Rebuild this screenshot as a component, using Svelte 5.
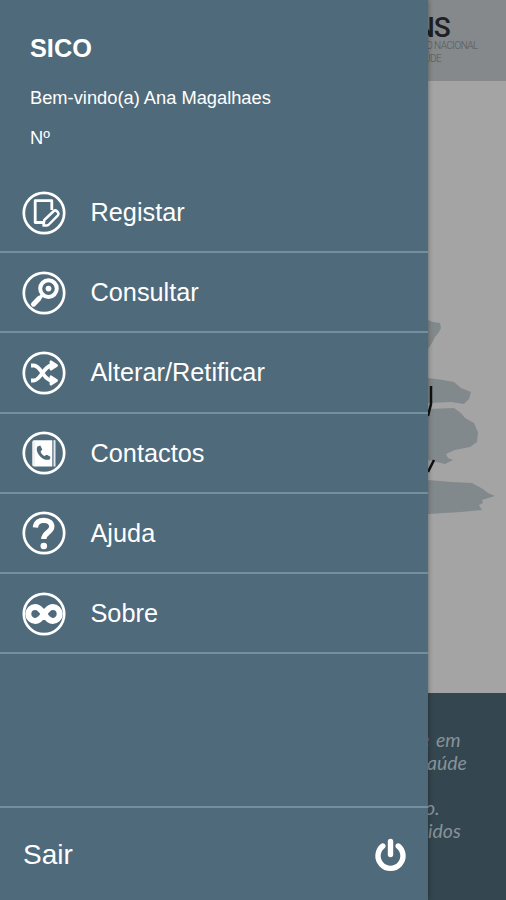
<script>
  let ativo = $state(null);

  const itens = [
    { id: 'registar', nome: 'Registar' },
    { id: 'consultar', nome: 'Consultar' },
    { id: 'alterar', nome: 'Alterar/Retificar' },
    { id: 'contactos', nome: 'Contactos' },
    { id: 'ajuda', nome: 'Ajuda' },
    { id: 'sobre', nome: 'Sobre' }
  ];
</script>

<div class="app">
  <aside class="menu">
    <div class="perfil">
      <h1>SICO</h1>
      <p>Bem-vindo(a) Ana Magalhaes</p>
      <p>Nº</p>
    </div>

    <nav>
      {#each itens as item}
        <button class="item" onclick={() => ativo = item.id}>
          <svg class="icone" viewBox="0 0 44 44" fill="none" stroke="#fff">
            <circle cx="22" cy="22" r="20.2" stroke-width="2.7" />
            {#if item.id === 'registar'}
              <path d="M29.8 19V9.7H13.2V31.5H21" stroke-width="2.8" stroke-linejoin="round" />
              <path d="M21.500 34.500l.8-5.500 9.500-9q1.500-1.200 2.800 0l1.500 1.500q1 1.400-.2 2.800l-9 9.200q-.8.8-2 .9z" stroke-width="2.500" stroke-linejoin="round" />
            {:else if item.id === 'consultar'}
              <circle cx="26.5" cy="17.6" r="8.3" stroke-width="4" />
              <circle cx="26.5" cy="17.6" r="2.9" fill="#fff" stroke="none" />
              <path d="M21 23.5l-5 5" stroke-width="3.4" />
              <path d="M17 27.5l-5.500 5.700" stroke-width="5" stroke-linecap="round" />
            {:else if item.id === 'alterar'}
              <path d="M9 14.500h3c7 0 9.500 15 18 15h2M9 29.500h3c7 0 9.500-15 18-15h2" stroke-width="3.800" />
              <path d="M29 10.800v7.400l5.500-3.700zM29 25.800v7.400l5.500-3.700z" fill="#fff" stroke-width="2.800" stroke-linejoin="round" />
            {:else if item.id === 'contactos'}
              <path d="M12 9.200h18.300v26.300h-18.300q-1.700 0-1.700-1.700v-22.900q0-1.700 1.700-1.700z" fill="#fff" stroke="none" />
              <path d="M32.500 9.200v26.300" stroke="#e3e9ec" stroke-width="2" />
              <path d="M12 10v25" stroke="#d3dbe0" stroke-width="0.800" />
              <path d="M15.500 15.500c-2 3 .3 7.700 3.200 10.500 3 2.800 6.800 3.600 9.300 2.200l.4-2.400-3.600-2.100-2.400 1.400c-1.800-.7-3.300-2.500-3.800-4.500l1.700-2.200-2-3.900z" fill="#4f6a7a" stroke="none" />
            {:else if item.id === 'ajuda'}
              <path d="M13.400 16.500c.4-5 4-7.400 8.700-7.200 4.500.2 7.700 2.500 7.700 6.300 0 5.700-8 5.900-8 12.300" stroke-width="5.300" />
              <circle cx="21.800" cy="35" r="3.300" fill="#fff" stroke="none" />
            {:else}
              <path d="M22 22c-2.800-4.200-5.300-7-8.700-7a7 7 0 0 0 0 14c3.400 0 5.900-2.800 8.700-7s5.300-7 8.700-7a7 7 0 0 1 0 14c-3.400 0-5.900-2.800-8.700-7z" stroke-width="6" />
            {/if}
          </svg>
          <span>{item.nome}</span>
        </button>
      {/each}
    </nav>

    <button class="sair">
      <span>Sair</span>
      <svg viewBox="0 0 34 34" fill="none" stroke="#fff" stroke-linecap="round">
        <path d="M9.800 8a12.500 12.500 0 1 0 15.400 0" stroke-width="5.400" />
        <path d="M17.500 3.500v13" stroke-width="5.400" />
      </svg>
    </button>
  </aside>

  <div class="pagina">
    <header>
      <div class="sns">NS</div>
      <div class="legenda">O NACIONAL</div>
      <div class="legenda saude">ÚDE</div>
    </header>
    <main>
      <svg class="mapa" viewBox="0 0 78 612">
        <path d="M0 239l5 2 7 1 1 5-2 4-4 5-3 6-4 6z" />
        <path d="M0 297l15 2 11 2 7 6 10 4-2 7-5 5-13-2-23 1z" />
        <path d="M0 328l26-1 7 5 4 5 9 5 2 5 2 4-1 10-7 5-15 3-9 4 2 4 5 2-8 4-17-4z" />
        <path d="M0 399l24 2 20 1 11 6 5 4 7 3-13 4 1 3-4 2 3 5-21 2-33 2z" />
        <path class="risco" d="M3 305v18l-3 12M6 379l-6 12" />
      </svg>
    </main>
    <footer>
      <p><span class="corte">e</span> em</p>
      <p class="recuo">aúde</p>
      <p>&nbsp;</p>
      <p class="ponto">o.</p>
      <p>idos</p>
    </footer>
  </div>
</div>

<style>
  :global(body) {
    margin: 0;
    font-family: "Liberation Sans", Arial, sans-serif;
    background: #a4a4a4;
  }

  .app {
    display: flex;
    width: 506px;
    height: 900px;
    overflow: hidden;
  }

  .menu {
    display: flex;
    flex-direction: column;
    width: 428px;
    flex-shrink: 0;
    z-index: 1;
    color: #fff;
    background: #4f6a7a;
    box-shadow: 0 0 5px rgba(0, 0, 0, 0.4);
  }

  .perfil {
    box-sizing: border-box;
    height: 173px;
    padding: 33px 30px 0;
  }

  h1 {
    margin: 0 0 22px;
    font-size: 25.3px;
    line-height: 30px;
  }

  .perfil p {
    margin: 0 0 15px;
    font-size: 18.3px;
    line-height: 25px;
    white-space: nowrap;
  }

  button {
    border: none;
    background: none;
    color: #fff;
    font-family: inherit;
    text-align: left;
    cursor: pointer;
  }

  .item {
    display: flex;
    align-items: center;
    box-sizing: border-box;
    width: 100%;
    height: 80.2px;
    padding: 1px 22px 0;
    gap: 24.5px;
    border-bottom: 2px solid #728f9e;
    font-size: 25.3px;
  }

  .icone {
    width: 44px;
    height: 44px;
    flex-shrink: 0;
  }

  .sair {
    display: flex;
    align-items: center;
    justify-content: space-between;
    box-sizing: border-box;
    height: 94px;
    margin-top: auto;
    padding: 2px 21px 0 23px;
    border-top: 2px solid #728f9e;
    font-size: 28px;
  }

  .sair svg {
    width: 34px;
    height: 34px;
  }

  .pagina {
    display: flex;
    flex-direction: column;
    width: 78px;
    overflow: hidden;
    white-space: nowrap;
  }

  header {
    box-sizing: border-box;
    height: 81px;
    padding-top: 14px;
    background: #85898b;
    color: #1c2022;
  }

  .sns {
    margin-left: -13px;
    font: 500 28px/28px Roboto, sans-serif;
    letter-spacing: -1px;
  }

  .legenda {
    margin-left: -2px;
    color: #54595c;
    font: 300 10px/12.5px Roboto, sans-serif;
    letter-spacing: -0.55px;
  }

  .sns + .legenda {
    margin-top: -2px;
  }

  .saude {
    margin-left: -4px;
  }

  main {
    height: 612px;
    background: #a4a4a4;
  }

  .mapa {
    display: block;
    width: 78px;
    height: 612px;
    fill: #82898c;
  }

  .risco {
    fill: none;
    stroke: #111;
    stroke-width: 2.5;
  }

  footer {
    flex: 1;
    padding-top: 36px;
    background: #34464f;
    color: #87939a;
  }

  footer p {
    margin: 0;
    font: italic 400 19.5px/22.8px Lato, sans-serif;
  }

  footer .corte {
    margin-left: -8px;
    margin-right: 2px;
  }

  footer .recuo {
    margin-left: -1px;
  }

  footer .ponto {
    margin-left: -3px;
  }
</style>
